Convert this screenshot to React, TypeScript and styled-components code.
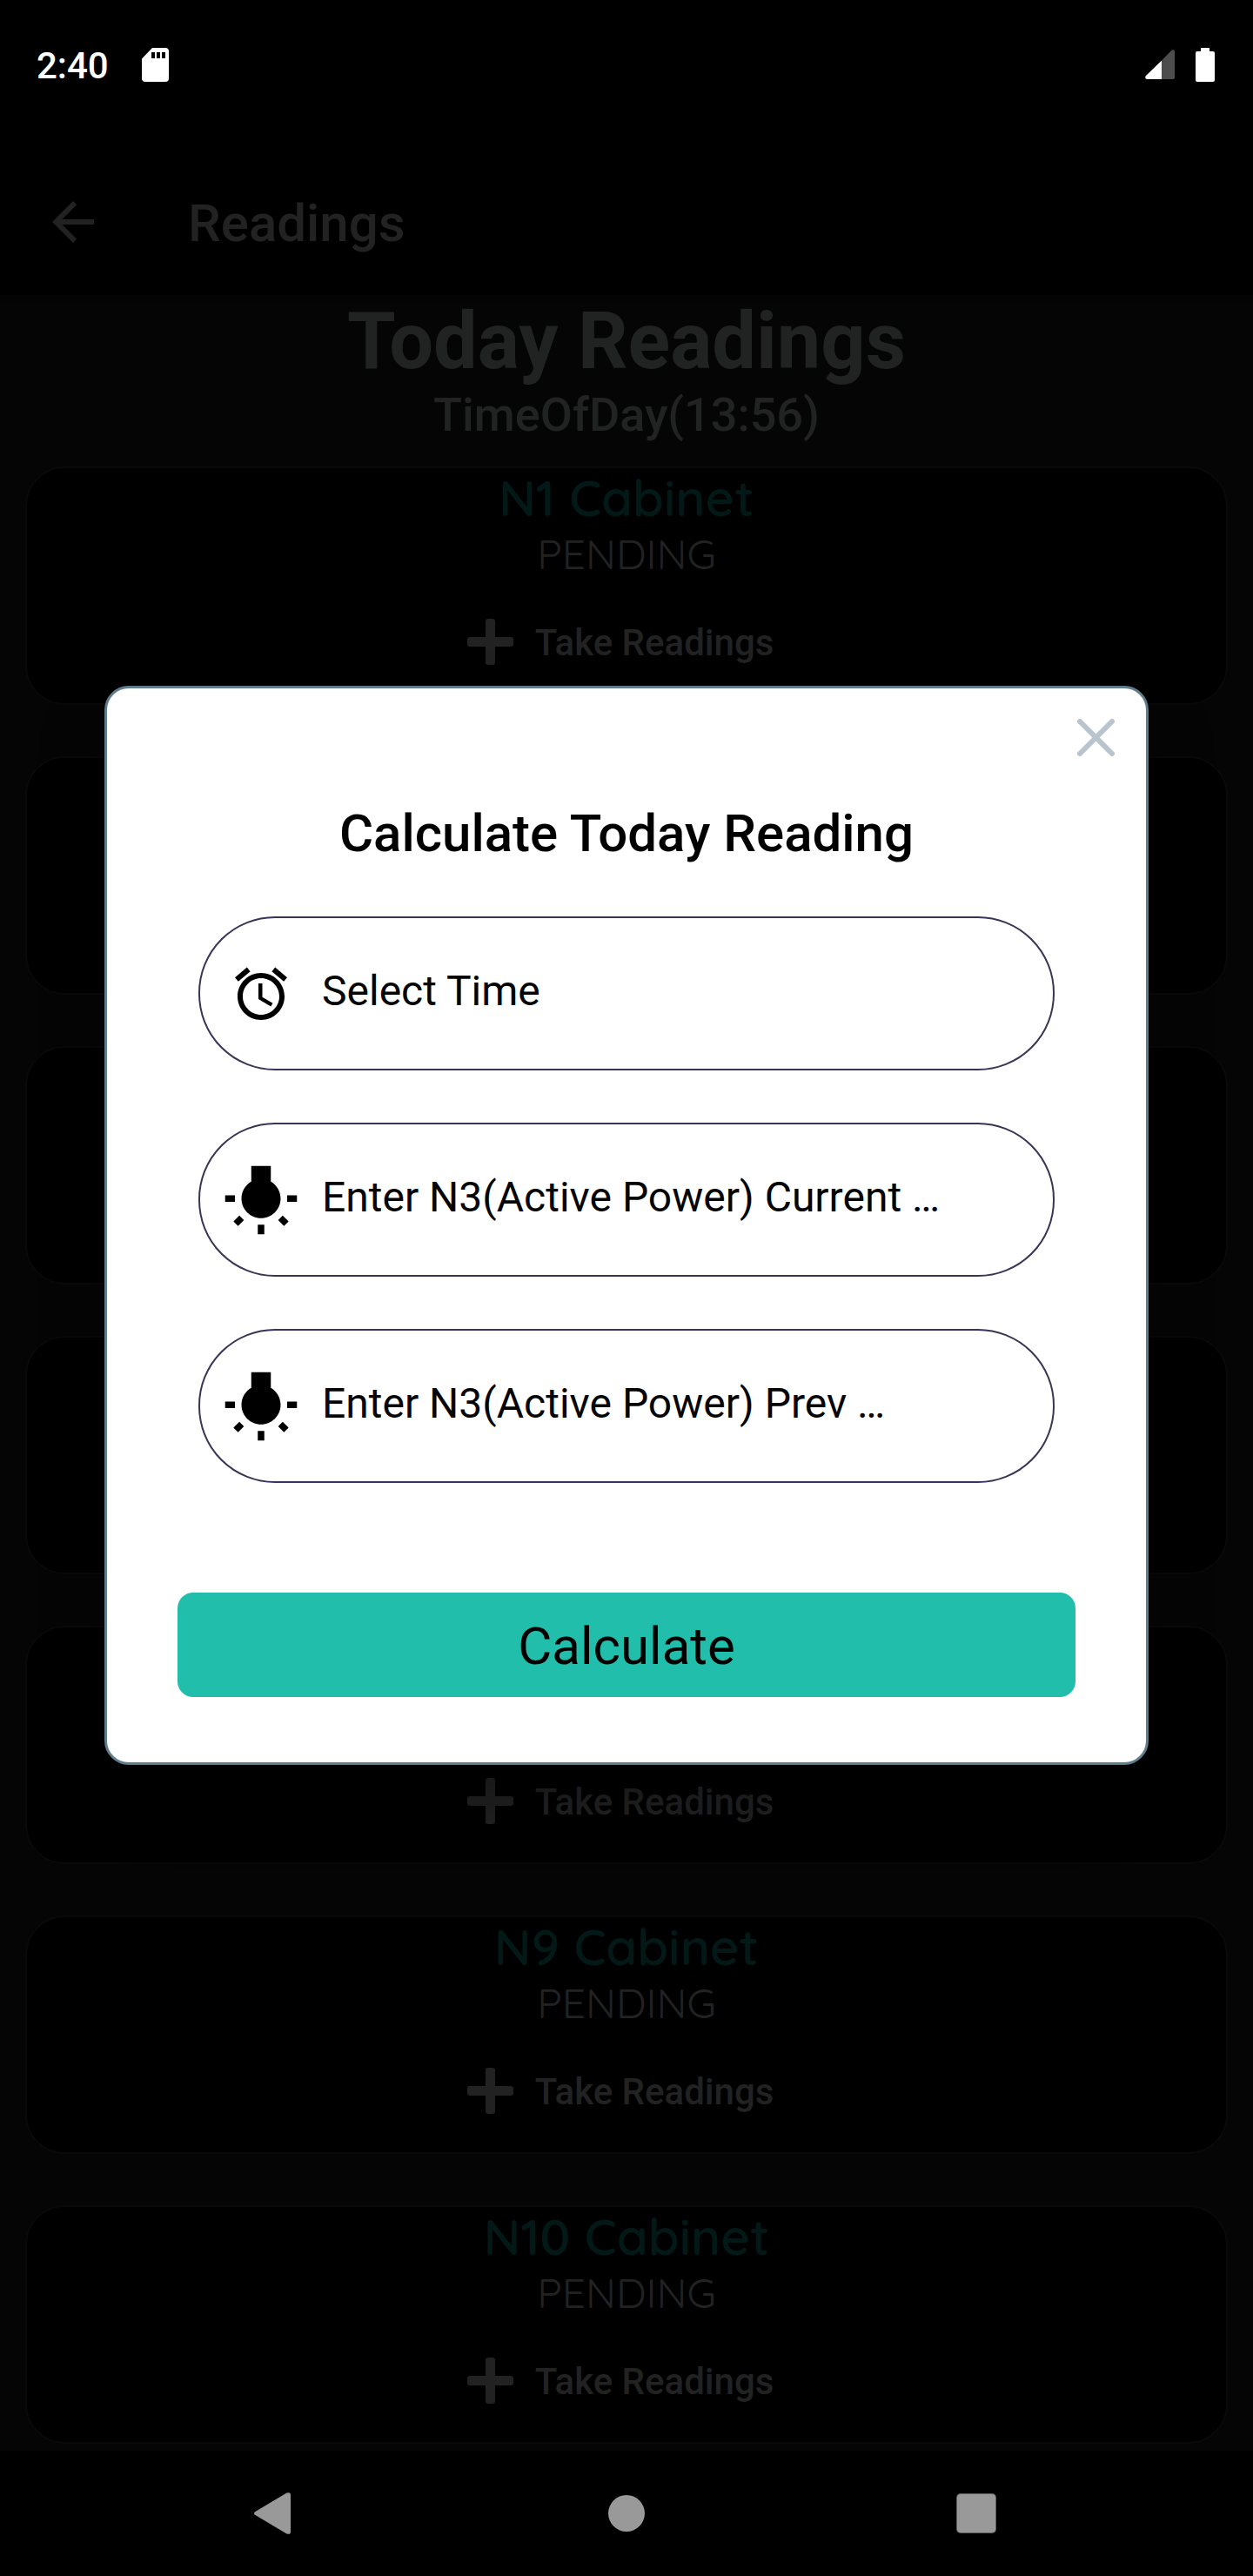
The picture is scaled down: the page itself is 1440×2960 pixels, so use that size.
import React from "react";
import styled, { createGlobalStyle } from "styled-components";

const GlobalStyle = createGlobalStyle`
  *, *::before, *::after { box-sizing: border-box; }
  html, body { margin: 0; background: #000; }
  body { font-family: Roboto, "Liberation Sans", sans-serif; }
  h1, h2, h3, p, ul { margin: 0; padding: 0; font-weight: inherit; }
  button, input { font: inherit; color: inherit; border: 0; padding: 0; background: none; }
  button { cursor: pointer; }
  svg { display: block; flex: none; }
`;

const Shell = styled.div`
  min-height: 100vh;
  display: flex;
  flex-direction: column;
  background: #000;
`;

const Screen = styled.div`
  position: relative;
  flex: 1;
  display: flex;
  flex-direction: column;
`;

const StatusBar = styled.div`
  height: 148px;
  padding: 0 44px 0 42px;
  display: flex;
  align-items: center;
  justify-content: space-between;
  color: #fff;
`;

const StatusGroup = styled.div<{ $gap: number }>`
  display: flex;
  align-items: center;
  gap: ${(p) => p.$gap}px;
`;

const Clock = styled.time`
  padding-top: 4px;
  font-size: 42px;
  line-height: 50px;
  font-weight: 500;
`;

const AppBar = styled.header`
  height: 191px;
  padding: 23px 48px 0;
  display: flex;
  align-items: center;
  gap: 96px;
  color: #222;
`;

const AppTitle = styled.h1`
  padding-top: 4px;
  font-size: 60px;
  line-height: 70px;
  font-weight: 500;
`;

const Body = styled.main`
  flex: 1;
  background: linear-gradient(#030303, #050505 16px);
  color: #212222;
  text-align: center;
`;

const Heading = styled.h2`
  font-size: 90px;
  line-height: 107px;
  font-weight: 700;
`;

const SubHeading = styled.p`
  font-size: 54px;
  line-height: 62px;
  font-weight: 500;
`;

const CardList = styled.ul`
  list-style: none;
  padding: 28px 29px 7px;
  display: flex;
  flex-direction: column;
  gap: 59px;
`;

const Card = styled.li`
  display: flex;
  flex-direction: column;
  align-items: center;
  background: #000;
  border: 2px solid #090909;
  border-radius: 45px;
`;

const Covered = styled.div<{ $hidden: boolean }>`
  visibility: ${(p) => (p.$hidden ? "hidden" : "visible")};
`;

const CardTitle = styled.h3`
  font-family: Quicksand, Inter, sans-serif;
  font-size: 58px;
  line-height: 68px;
  font-weight: 600;
  color: #031917;
`;

const CardState = styled.p`
  font-family: Quicksand, Inter, sans-serif;
  font-size: 48px;
  line-height: 60px;
  font-weight: 400;
  color: #222;
`;

const TakeButton = styled.button`
  height: 142px;
  padding-right: 14px;
  display: flex;
  align-items: center;
  gap: 25px;
  color: #222;
`;

const TakeLabel = styled.span`
  padding-top: 4px;
  font-size: 42px;
  line-height: 50px;
  font-weight: 500;
`;

const Overlay = styled.div`
  position: absolute;
  inset: 0;
  padding: 0 120px;
  display: flex;
  align-items: center;
`;

const Dialog = styled.section`
  flex: 1;
  padding: 35px 36px 75px;
  display: flex;
  flex-direction: column;
  background: #fff;
  border: 3px solid #607d8b;
  border-radius: 28px;
  box-shadow: 0 40px 70px rgba(0, 0, 0, 0.35);
  color: #000;
`;

const CloseButton = styled.button`
  align-self: flex-end;
`;

const DialogTitle = styled.h2`
  margin-top: 54px;
  font-size: 60px;
  line-height: 70px;
  font-weight: 500;
  text-align: center;
`;

const Form = styled.form`
  padding: 0 45px;
  margin-top: 60px;
  display: flex;
  flex-direction: column;
  gap: 66px;
`;

const Fields = styled.div`
  padding: 0 24px 60px;
  display: flex;
  flex-direction: column;
  gap: 60px;
`;

const Field = styled.label`
  height: 177px;
  padding-right: 80px;
  display: grid;
  grid-template-columns: 140px 1fr;
  align-items: center;
  border: 2px solid #3a3456;
  border-radius: 88px;
`;

const FieldIcon = styled.span`
  display: flex;
  justify-content: center;
`;

const FieldInput = styled.input`
  width: 100%;
  height: 64px;
  padding-bottom: 6px;
  font-size: 48px;
  line-height: 58px;
  outline: none;
  text-overflow: ellipsis;

  &::placeholder {
    color: #050505;
    opacity: 1;
  }
`;

const CalculateButton = styled.button`
  height: 120px;
  padding-top: 4px;
  border-radius: 18px;
  background: #21bfab;
  font-size: 60px;
  line-height: 70px;
`;

const NavBar = styled.nav`
  height: 144px;
  padding: 0 117px;
  display: grid;
  grid-template-columns: repeat(3, 1fr);
  align-items: center;
  justify-items: center;
  color: #999;
`;

const NavButton = styled.button`
  display: flex;
`;

const BULB =
  "M3.55 18.54l1.41 1.41 1.8-1.79-1.41-1.41-1.8 1.79zM11 22.45h2V19.5h-2v2.95zM4 10.5H1v2h3v-2zm11-4.19V1.5H9v4.81C7.21 7.35 6 9.28 6 11.5c0 3.31 2.69 6 6 6s6-2.69 6-6c0-2.22-1.21-4.15-3-5.19zm5 4.19v2h3v-2h-3zm-2.76 7.66l1.79 1.8 1.41-1.41-1.8-1.79-1.4 1.4z";
const ALARM =
  "M22 5.72l-4.6-3.86-1.29 1.53 4.6 3.86L22 5.72zM7.88 3.39L6.6 1.86 2 5.71l1.29 1.53 4.59-3.85zM12.5 8H11v6l4.75 2.85.75-1.23-4-2.37V8zM12 4c-4.97 0-9 4.03-9 9s4.02 9 9 9c4.97 0 9-4.03 9-9s-4.03-9-9-9zm0 16c-3.87 0-7-3.13-7-7s3.13-7 7-7 7 3.13 7 7-3.13 7-7 7z";
const BACK = "M20 11H7.83l5.59-5.59L12 4l-8 8 8 8 1.41-1.41L7.83 13H20v-2z";

function Glyph({ d, size }: { d: string; size: number }) {
  return (
    <svg width={size} height={size} viewBox="0 0 24 24" fill="currentColor" aria-hidden="true">
      <path d={d} />
    </svg>
  );
}

// Parts of a card that lie behind the open dialog are kept out of sight and out of the tab order.
const cabinets = [
  { name: "N1", textCovered: false, actionCovered: false },
  { name: "N3", textCovered: true, actionCovered: true },
  { name: "N4", textCovered: true, actionCovered: true },
  { name: "N5", textCovered: true, actionCovered: true },
  { name: "N8", textCovered: true, actionCovered: false },
  { name: "N9", textCovered: false, actionCovered: false },
  { name: "N10", textCovered: false, actionCovered: false },
];

const fields = [
  { id: "time", hint: "Select Time", icon: ALARM, size: 72 },
  { id: "current", hint: "Enter N3(Active Power) Current …", icon: BULB, size: 90 },
  { id: "previous", hint: "Enter N3(Active Power) Prev …", icon: BULB, size: 90 },
];

export default function App() {
  return (
    <Shell>
      <GlobalStyle />
      <Screen>
        <StatusBar>
          <StatusGroup $gap={38}>
            <Clock>2:40</Clock>
            <svg width="31" height="39" viewBox="0 0 31 39" aria-hidden="true">
              <path fill="#fff" d="M12 0h15a4 4 0 0 1 4 4v31a4 4 0 0 1-4 4H4a4 4 0 0 1-4-4V12.500z" />
              <path fill="#000" d="M11 5h4v7h-4zM17 5h4v7h-4zM23 5h4v7h-4z" />
            </svg>
          </StatusGroup>
          <StatusGroup $gap={24}>
            <svg width="34" height="34" viewBox="0 0 34 34" aria-hidden="true">
              <path fill="#4d4d4d" d="M19 12.500L30.500.8Q34-1 34 2v30a2 2 0 0 1-2 2H19z" />
              <path fill="#fff" d="M19 12.500V34H2q-3-1-1-4z" />
            </svg>
            <svg width="22" height="39" viewBox="0 0 22 39" aria-hidden="true">
              <path fill="#fff" d="M6 0h10v4h4a2 2 0 0 1 2 2v31a2 2 0 0 1-2 2H2a2 2 0 0 1-2-2V6a2 2 0 0 1 2-2h4z" />
            </svg>
          </StatusGroup>
        </StatusBar>
        <AppBar>
          <NavButton type="button" aria-label="Back">
            <Glyph d={BACK} size={72} />
          </NavButton>
          <AppTitle>Readings</AppTitle>
        </AppBar>
        <Body>
          <Heading>Today Readings</Heading>
          <SubHeading>TimeOfDay(13:56)</SubHeading>
          <CardList>
            {cabinets.map((c) => (
              <Card key={c.name}>
                <Covered $hidden={c.textCovered}>
                  <CardTitle>{c.name} Cabinet</CardTitle>
                  <CardState>PENDING</CardState>
                </Covered>
                <Covered $hidden={c.actionCovered}>
                  <TakeButton type="button">
                    <svg width="53" height="53" viewBox="0 0 53 53" fill="currentColor" aria-hidden="true">
                      <rect x="21" width="11" height="53" rx="3" />
                      <rect y="21" width="53" height="11" rx="3" />
                    </svg>
                    <TakeLabel>Take Readings</TakeLabel>
                  </TakeButton>
                </Covered>
              </Card>
            ))}
          </CardList>
        </Body>
        <Overlay>
          <Dialog role="dialog" aria-modal="true" aria-labelledby="dialog-title">
            <CloseButton type="button" aria-label="Close">
              <svg width="43" height="43" viewBox="0 0 43 43" aria-hidden="true">
                <path d="M3 3l37 37M40 3L3 40" fill="none" stroke="#b9c4ce" strokeWidth="6" strokeLinecap="round" />
              </svg>
            </CloseButton>
            <DialogTitle id="dialog-title">Calculate Today Reading</DialogTitle>
            <Form onSubmit={(e) => e.preventDefault()}>
              <Fields>
                {fields.map((f) => (
                  <Field key={f.id} htmlFor={f.id}>
                    <FieldIcon>
                      <Glyph d={f.icon} size={f.size} />
                    </FieldIcon>
                    <FieldInput id={f.id} name={f.id} type="text" placeholder={f.hint} aria-label={f.hint} />
                  </Field>
                ))}
              </Fields>
              <CalculateButton type="submit">Calculate</CalculateButton>
            </Form>
          </Dialog>
        </Overlay>
      </Screen>
      <NavBar aria-label="System">
        <NavButton type="button" aria-label="Back">
          <svg width="52" height="48" viewBox="0 0 52 48" fill="currentColor" aria-hidden="true">
            <path d="M1 22.200L37.500.6Q42-1 42 3v42q0 4-4.500 2.400L1 25.800q-2-1.800 0-3.600z" />
          </svg>
        </NavButton>
        <NavButton type="button" aria-label="Home">
          <svg width="42" height="42" viewBox="0 0 42 42" fill="currentColor" aria-hidden="true">
            <circle cx="21" cy="21" r="21" />
          </svg>
        </NavButton>
        <NavButton type="button" aria-label="Recent apps">
          <svg width="46" height="46" viewBox="0 0 46 46" aria-hidden="true">
            <rect width="46" height="46" rx="5" fill="#5c5c5c" />
            <rect x="1" y="1" width="44" height="44" rx="4" fill="currentColor" />
          </svg>
        </NavButton>
      </NavBar>
    </Shell>
  );
}
